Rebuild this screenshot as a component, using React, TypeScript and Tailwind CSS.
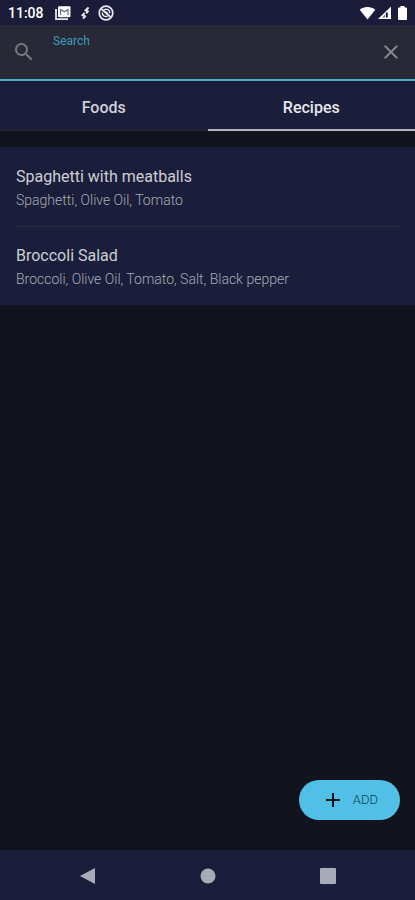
import { useState } from "react";
import { MdAdd, MdClose, MdSearch } from "react-icons/md";

const tabs = ["Foods", "Recipes"];

const recipes = [
  { name: "Spaghetti with meatballs", ingredients: "Spaghetti, Olive Oil, Tomato" },
  { name: "Broccoli Salad", ingredients: "Broccoli, Olive Oil, Tomato, Salt, Black pepper" },
];

function StatusBar() {
  return (
    <div className="flex h-[25px] items-center justify-between bg-[#1a1c39] pl-2 pr-[7px] text-white">
      <div className="flex items-center">
        <span className="w-[46px] text-sm leading-4 font-medium">11:08</span>
        <svg className="h-4 w-[18px]" viewBox="0 0 18 16">
          <path d="M2 4v10.2h12" fill="none" stroke="#e8e8ee" strokeWidth="1.8" />
          <rect x="4" y="1.2" width="12.5" height="11" rx="1.2" fill="#fff" />
          <path d="M6.5 10V4.5l3.8 2.2L14 4.5V10" fill="none" stroke="#6a6c82" strokeWidth="1.2" />
        </svg>
        <svg className="ml-2 h-4 w-3" viewBox="0 0 12 16" fill="none" stroke="#e8e8ee" strokeWidth="2">
          <path d="M8.6 2.6 5.6 5.2l2.2 1.2-1.6 2" />
          <path d="M4.6 8 2.6 10.2l2.4 1.2-2 2.2" />
        </svg>
        <svg className="ml-[6px] h-4 w-4" viewBox="0 0 16 16" fill="none" stroke="#e8e8ee">
          <circle cx="8" cy="8" r="6.8" strokeWidth="1.7" />
          <path d="M3.5 4 12.5 12" strokeWidth="1.8" />
          <path d="M6 4.8c3-1.6 6 .2 5.8 3.4M4.2 7.5c0 3 2.6 4.6 5.4 3.7" strokeWidth="1.5" />
          <path d="M7.5 6.5 10 8.5" strokeWidth="1.2" />
        </svg>
      </div>
      <div className="flex items-center gap-px">
        <svg className="h-4 w-[17px]" viewBox="0 0 17 16">
          <path d="M8.5 14.5.7 4.8C4.7 1.200 12.3 1.200 16.3 4.8Z" fill="#fff" />
        </svg>
        <svg className="h-4 w-[15px]" viewBox="0 0 15 16">
          <path d="M1 14 14 1.5V14Z" fill="#fff" />
          <path d="M9.8 12.500V7.5" stroke="#1a1c39" strokeWidth="2" />
          <path d="M5 12.5 8 9.500v3Z" fill="#777988" />
        </svg>
        <svg className="ml-1 h-4 w-[11px]" viewBox="0 0 11 16">
          <path d="M3.5 1h4v1.500H9q1 0 1 1V14q0 1-1 1H2q-1 0-1-1V3.500q0-1 1-1h1.500Z" fill="#fff" />
        </svg>
      </div>
    </div>
  );
}

function SearchBar() {
  const [query, setQuery] = useState("");

  return (
    <div className="flex h-14 items-center border-b-2 border-[#52a9c8] bg-[#272936] px-3">
      <MdSearch className="size-6 shrink-0 text-[#777881]" />
      <div className="ml-[17px] flex h-full flex-1 flex-col pt-2">
        <label htmlFor="search" className="text-xs leading-4 text-[#3e9ab8]">Search</label>
        <input
          id="search"
          type="text"
          value={query}
          onChange={(e) => setQuery(e.target.value)}
          className="w-full flex-1 bg-transparent text-base text-[#d0d1d8] outline-none"
        />
      </div>
      <button type="button" aria-label="Clear search" onClick={() => setQuery("")} className="shrink-0 text-[#85868e]">
        <MdClose className="size-6" />
      </button>
    </div>
  );
}

export default function App() {
  const [activeTab, setActiveTab] = useState("Recipes");

  return (
    <div className="flex min-h-screen flex-col bg-[#11131e] font-[Roboto,sans-serif]">
      <StatusBar />
      <SearchBar />

      {/* Tabs */}
      <div role="tablist" className="grid h-[50px] grid-cols-2 bg-[#1b1e3a]">
        {tabs.map((tab) => (
          <button
            key={tab}
            type="button"
            role="tab"
            aria-selected={tab === activeTab}
            onClick={() => setActiveTab(tab)}
            className={`border-b-2 pt-1.5 text-base font-medium ${tab === activeTab ? "border-[#b5b5bf] text-[#e6e7ec]" : "border-[#202339] text-[#cfd0d8]"}`}
          >
            {tab}
          </button>
        ))}
      </div>

      {/* Recipe list */}
      <main className="flex flex-1 flex-col pt-4">
        <ul className="bg-[#1b1e3a] px-4 pt-px">
          {recipes.map((recipe) => (
            <li key={recipe.name} className="border-b border-[#2a2c46] pt-[17px] pb-4 last:border-b-0">
              <p className="text-base leading-6 text-[#cdced4]">{recipe.name}</p>
              <p className="mt-px text-sm leading-5 font-light text-[#a9abb6]">{recipe.ingredients}</p>
            </li>
          ))}
        </ul>

        <button
          type="button"
          className="mt-auto mr-[15px] mb-[30px] flex h-10 items-center gap-2 self-end rounded-full bg-[#52c0e6] px-[22px] text-[13px] font-light text-[#0f3d52]"
        >
          <MdAdd className="size-6 text-[#071420]" />
          ADD
        </button>
      </main>

      {/* System navigation */}
      <nav className="flex h-[50px] items-center justify-center gap-[104px] bg-[#1b1e3a] pt-0.5 text-[#a9abb8]">
        <button type="button" aria-label="Back">
          <svg className="size-4" viewBox="0 0 16 16" fill="currentColor">
            <path d="M15 0v16L0 8Z" />
          </svg>
        </button>
        <button type="button" aria-label="Home">
          <svg className="size-4" viewBox="0 0 16 16" fill="currentColor">
            <circle cx="8" cy="8" r="7.5" />
          </svg>
        </button>
        <button type="button" aria-label="Recent apps">
          <svg className="size-4" viewBox="0 0 16 16" fill="currentColor">
            <rect width="16" height="16" rx="1" />
          </svg>
        </button>
      </nav>
    </div>
  );
}
